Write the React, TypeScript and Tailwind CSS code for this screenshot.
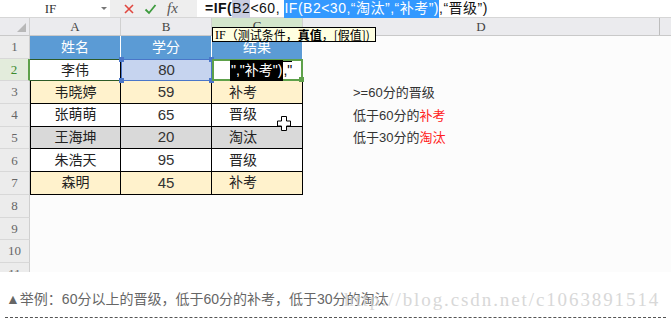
import React from 'react';

const CJK = "font-['Liberation_Sans','Noto_Sans_CJK_SC',sans-serif]";
const SERIF = "font-['Liberation_Serif','Noto_Sans_CJK_SC',serif]";

type Row = { n: number; name: string; score: string; result: string; bg: string };

const rows: Row[] = [
  { n: 3, name: '韦晓婷', score: '59', result: '补考', bg: 'bg-[#fff2cc]' },
  { n: 4, name: '张萌萌', score: '65', result: '晋级', bg: 'bg-white' },
  { n: 5, name: '王海坤', score: '20', result: '淘汰', bg: 'bg-[#d9d9d9]' },
  { n: 6, name: '朱浩天', score: '95', result: '晋级', bg: 'bg-white' },
  { n: 7, name: '森明', score: '45', result: '补考', bg: 'bg-[#fff2cc]' },
];

const notes: Record<number, React.ReactNode> = {
  3: <>&gt;=60分的晋级</>,
  4: <>低于60分的<span className="text-[#ff2020]">补考</span></>,
  5: <>低于30分的<span className="text-[#ff2020]">淘汰</span></>,
};

const RowHead = ({ n, active }: { n: number; active?: boolean }) => (
  <div
    className={`w-[30px] shrink-0 flex items-center justify-center text-[13px] border-b border-[#d8d8d8] ${SERIF} ${
      active ? 'bg-[#e3ecdc] text-[#3c8a2e] border-r-2 border-r-[#5ea14a]' : 'bg-[#ececec] text-[#666] border-r border-r-[#cfcfcf]'
    }`}
  >
    {n}
  </div>
);

const Handle = ({ className }: { className: string }) => (
  <span className={`absolute w-[5px] h-[5px] bg-[#4a76c9] ${className}`} />
);

export default function App() {
  return (
    <div className={`relative w-[671px] h-[320px] overflow-hidden bg-white flex flex-col ${CJK}`}>
      {/* formula bar */}
      <div className="h-[18px] flex shrink-0 bg-white border-b border-[#d6d6d6]">
        <div className="w-[110px] flex items-center relative">
          <span className={`flex-1 text-center text-[13px] text-[#333] ${SERIF}`}>IF</span>
          <span className="mr-[3px] w-0 h-0 border-l-[3px] border-r-[3px] border-t-[3px] border-l-transparent border-r-transparent border-t-[#777]" />
        </div>
        <div className="w-[87px] bg-[#eeeeee] flex items-center pl-[13px] gap-[9px]">
          <svg width="12" height="12" viewBox="0 0 12 12">
            <path d="M2 2 L10 10 M10 2 L2 10" stroke="#e0473f" strokeWidth="1.6" />
          </svg>
          <svg width="13" height="12" viewBox="0 0 13 12">
            <path d="M1.5 6.5 L5 10 L11.5 2" stroke="#3e9b3e" strokeWidth="1.8" fill="none" />
          </svg>
          <span className={`text-[15px] italic text-[#555] ml-[1px] ${SERIF}`}>fx</span>
        </div>
        <div className="flex-1 flex items-center pl-[8px] text-[14px] tracking-[0.5px] text-[#111] whitespace-pre">
          <span className="font-bold">=IF(</span>
          <span className="bg-[#c8cde0]">B2</span>
          <span>&lt;60, </span>
          <span className="bg-[#3399ff] text-white">IF(B2&lt;30,“淘汰”,“补考”)</span>
          <span>,“晋级”)</span>
        </div>
      </div>

      {/* sheet */}
      <div className="relative h-[254px] shrink-0 overflow-hidden bg-[#fcfcfc]">
        {/* column headers */}
        <div className={`h-[18px] flex bg-[#ebebee] border-b border-[#c9c9c9] text-[13px] text-[#444] ${SERIF}`}>
          <div className="w-[30px] relative border-r border-[#d0d0d0]">
            <svg className="absolute right-[3px] bottom-[3px]" width="9" height="9" viewBox="0 0 9 9">
              <path d="M9 0 V9 H0 Z" fill="#b8b8b8" />
            </svg>
          </div>
          <div className="w-[91px] flex items-center justify-center border-r border-[#d0d0d0]">A</div>
          <div className="w-[91px] flex items-center justify-center border-r border-[#d0d0d0]">B</div>
          <div className="w-[91px] flex items-center justify-center bg-[#d3e6cc] border-r border-[#d0d0d0] border-b-2 border-b-[#5ea14a]">C</div>
          <div className="w-[357px] flex items-center justify-center border-r border-[#bdbdbd]">D</div>
          <div className="flex-1" />
        </div>

        {/* row 1 */}
        <div className="h-[22.7px] flex">
          <RowHead n={1} />
          {['姓名', '学分', '结果'].map((t) => (
            <div key={t} className="w-[91px] bg-[#5b9bd5] text-white text-[14px] flex items-center justify-center border-r border-white">
              {t}
            </div>
          ))}
        </div>

        {/* row 2 */}
        <div className="h-[22.7px] flex">
          <RowHead n={2} active />
          <div className="w-[91px] bg-white text-[14px] text-[#222] flex items-center justify-center border-y border-[#2d5a27] border-r border-r-black">
            李伟
          </div>
          <div className="relative w-[91px] bg-[#c6d4ef] text-[15px] text-[#333] flex items-center justify-center border border-[#4a76c9]">
            80
            <Handle className="-left-[3px] -top-[3px]" />
            <Handle className="-right-[3px] -top-[3px]" />
            <Handle className="-left-[3px] -bottom-[3px]" />
            <Handle className="-right-[3px] -bottom-[3px]" />
          </div>
          <div className="relative w-[91px] bg-white border-2 border-[#5ea14a] flex items-center pl-[16px] text-[14px] whitespace-pre">
            <span className="absolute left-[16px] top-0 w-[62px] h-[1.5px] bg-black" />
            <span className="bg-black text-white px-[1px]">","补考")</span>
            <span className="text-black">,"</span>
            <span className="absolute -right-[3px] -bottom-[3px] w-[5px] h-[5px] bg-[#5ea14a]" />
          </div>
          <div className="w-[357px]" />
        </div>

        {rows.map((r) => (
          <div key={r.n} className="h-[22.7px] flex">
            <RowHead n={r.n} />
            <div className={`w-[91px] ${r.bg} text-[14px] text-[#222] flex items-center justify-center border-l border-r border-b border-black`}>
              {r.name}
            </div>
            <div className={`w-[91px] ${r.bg} text-[15px] text-[#333] flex items-center justify-center border-r border-b border-black`}>
              {r.score}
            </div>
            <div className={`w-[91px] ${r.bg} text-[14px] text-[#222] flex items-center pl-[17px] border-r border-b border-black`}>
              {r.result}
            </div>
            <div className="w-[357px] flex items-center pl-[50px] text-[13px] text-[#333]">{notes[r.n]}</div>
          </div>
        ))}

        {[8, 9, 10, 11].map((n) => (
          <div key={n} className="h-[22.7px] flex">
            <RowHead n={n} />
          </div>
        ))}
      </div>

      {/* caption */}
      <div className="relative flex-1 bg-white">
        <div className="absolute left-[6px] top-[17px] text-[14px] text-[#666]">▲举例：60分以上的晋级，低于60分的补考，低于30分的淘汰</div>
        <div className="absolute left-[344px] top-[14px] text-[19px] tracking-[1.9px] text-[#cfcfcf] opacity-80 font-['Liberation_Serif',serif]">
          http://blog.csdn.net/c1063891514
        </div>
        <div className="absolute left-[5px] right-[5px] bottom-[2px] border-t border-dashed border-[#555]" />
      </div>

      {/* tooltip */}
      <div className="absolute left-[212px] top-[27px] h-[15px] w-[164px] bg-[#ffffe1] border border-black flex items-center pl-[2px] text-[12px] text-black whitespace-pre font-['Noto_Sans_CJK_SC',sans-serif]">
        <span className={SERIF}>IF</span>（测试条件，<b>真值</b>，[假值])
      </div>

      {/* cursor */}
      <svg className="absolute left-[277px] top-[116px]" width="14" height="15" viewBox="0 0 14 15">
        <path d="M4.5 0.5 H9.5 V5 H13.5 V10 H9.5 V14.5 H4.5 V10 H0.5 V5 H4.5 Z" fill="white" stroke="black" strokeWidth="1" />
      </svg>
    </div>
  );
}
